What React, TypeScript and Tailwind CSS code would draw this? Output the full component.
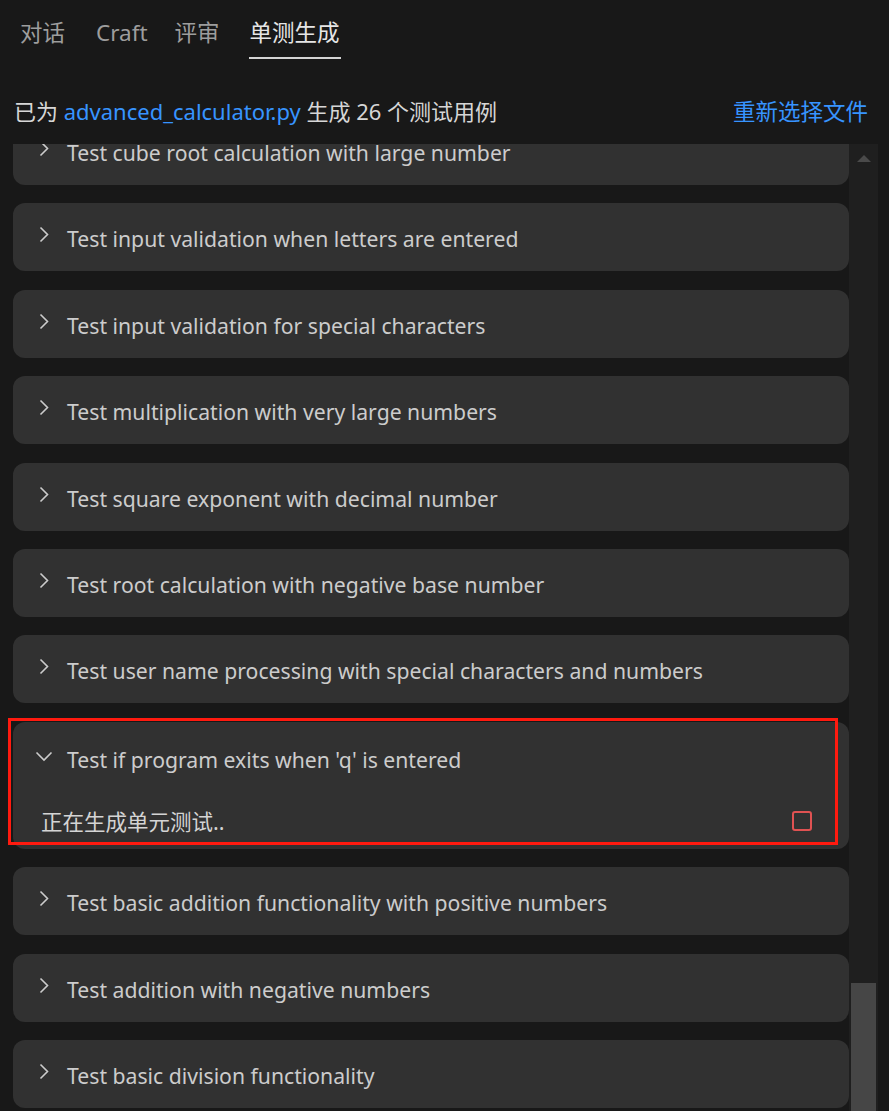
const FONT = { fontFamily: '"Segoe UI", "Noto Sans", "Noto Sans CJK SC", sans-serif' };

const tests = [
  "Test cube root calculation with large number",
  "Test input validation when letters are entered",
  "Test input validation for special characters",
  "Test multiplication with very large numbers",
  "Test square exponent with decimal number",
  "Test root calculation with negative base number",
  "Test user name processing with special characters and numbers",
  "Test if program exits when 'q' is entered",
  "Test basic addition functionality with positive numbers",
  "Test addition with negative numbers",
  "Test basic division functionality",
];

const EXPANDED = 7;

function ChevRight() {
  return (
    <svg width="12" height="18" viewBox="0 0 12 18" className="shrink-0 -mt-[8px]">
      <polyline points="2.5,1.5 9.5,8.5 2.5,15.5" fill="none" stroke="#cccccc" strokeWidth="1.6" />
    </svg>
  );
}

function ChevDown() {
  return (
    <svg width="18" height="11" viewBox="0 0 18 11" className="shrink-0 -mt-[6px]">
      <polyline points="1.5,1.5 9,9 16.5,1.5" fill="none" stroke="#cccccc" strokeWidth="1.6" />
    </svg>
  );
}

export default function App() {
  return (
    <div className="w-[889px] h-[1111px] overflow-hidden bg-[#181818] text-[#cccccc] flex flex-col" style={FONT}>
      {/* Tabs */}
      <div className="flex items-start pl-[20px] pt-[16px] h-[59px] text-[22.5px] leading-[33px]">
        <div className="text-[#9d9d9d] mr-[31px]">对话</div>
        <div className="text-[#9d9d9d] mr-[27px]">Craft</div>
        <div className="text-[#9d9d9d] mr-[29px]">评审</div>
        <div className="text-[#e6e6e6] border-b-2 border-[#d4d4d4] h-[43px] px-[1px]">单测生成</div>
      </div>

      {/* Summary */}
      <div className="flex items-center justify-between pl-[14px] pr-[21px] h-[85px] pt-[20px] text-[22px]">
        <div className="text-[#d6d6d6]">
          已为 <span className="text-[#3794ff]">advanced_calculator.py</span> 生成 26 个测试用例
        </div>
        <button className="text-[#3794ff] text-[22.5px]">重新选择文件</button>
      </div>

      {/* List */}
      <div className="flex flex-1 min-h-0">
        <div className="w-[849px] overflow-hidden pl-[13px]">
          <div className="flex flex-col gap-[18.4px] -mt-[27px]">
            {tests.map((t, i) =>
              i === EXPANDED ? (
                <div key={t} className="relative bg-[#313131] rounded-[12px] h-[127px] pl-[22px] pr-[28px] pt-[23px]">
                  <div className="flex items-center text-[21.2px] h-[30px] gap-[14px]">
                    <ChevDown />
                    <span>{t}</span>
                  </div>
                  <div className="flex items-center justify-between mt-[31px] pl-[6px] text-[21.5px]">
                    <span className="text-[#d4d4d4]">正在生成单元测试..</span>
                    <span className="w-[20px] h-[20px] border-2 border-[#e05252] rounded-[3px] mr-[9px] -mt-[2px]" />
                  </div>
                  {/* annotation frame */}
                  <div className="absolute -left-[5px] -top-[4px] w-[830px] h-[127px] border-[3px] border-[#ff1a0f] pointer-events-none" />
                </div>
              ) : (
                <div key={t} className="bg-[#313131] rounded-[12px] h-[68px] flex items-center pl-[25px] pr-[28px] pt-[4px] gap-[17px]">
                  <ChevRight />
                  <span className="text-[21.2px]">{t}</span>
                </div>
              )
            )}
          </div>
        </div>

        {/* Scrollbar */}
        <div className="w-[29px] bg-[#1f1f1f] flex flex-col items-center justify-between">
          <svg width="14" height="8" viewBox="0 0 14 8" className="mt-[11px]">
            <polygon points="7,0 14,7 0,7" fill="#4a4a4a" />
          </svg>
          <div className="w-[25px] h-[128px] bg-[#464646]" />
        </div>
      </div>
    </div>
  );
}
